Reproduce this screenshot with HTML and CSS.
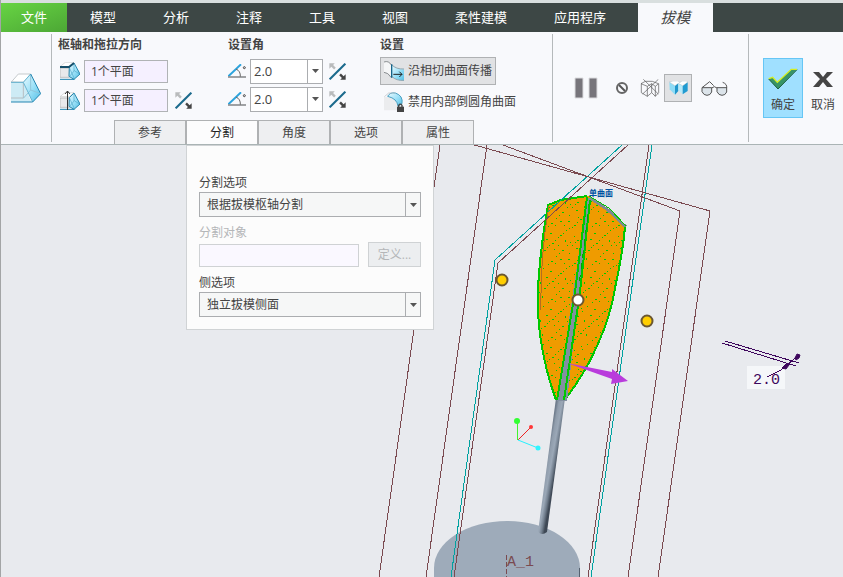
FILE: index.html
```
<!DOCTYPE html>
<html lang="zh-CN">
<head>
<meta charset="utf-8">
<title>拔模</title>
<link rel="stylesheet" href="styles.css">
</head>
<body>
<svg class="defs" width="0" height="0" aria-hidden="true">
  <defs>
    <linearGradient id="glass" x1="0" y1="0" x2="1" y2="1">
      <stop offset="0" stop-color="#eafaff"/><stop offset="0.5" stop-color="#9fe2f8"/><stop offset="1" stop-color="#52bfe6"/>
    </linearGradient>
    <symbol id="flip" viewBox="0 0 48 50">
      <path d="M1 48L47 2" stroke="#1b6a8c" stroke-width="6"/>
      <path d="M0 1h16l-5 5 8 8-5 5-8-8-6 6z" fill="#b9bbbc"/>
      <path d="M48 49H32l5-5-8-8 5-5 8 8 6-6z" fill="#444"/>
    </symbol>
    <symbol id="angle" viewBox="0 0 54 42">
      <path d="M1 37L39 1" stroke="#2ba3dd" stroke-width="6"/>
      <path d="M0 39h54" stroke="#8d9092" stroke-width="5"/>
      <path d="M24 15q14 6 13 23" fill="none" stroke="#666" stroke-width="3"/>
      <circle cx="49" cy="11" r="3" fill="none" stroke="#444" stroke-width="3"/>
    </symbol>
    <symbol id="wedge" viewBox="0 0 60 54">
      <path d="M0 14L16 1h26L28 14z" fill="#fff" stroke="#c8cacc" stroke-width="2"/>
      <path d="M0 18h28v28H0z" fill="#e8e9eb" stroke="#aaa" stroke-width="2"/>
      <path d="M28 17L42 3 60 36 42 52 27 43z" fill="url(#glass)" stroke="#2686ac" stroke-width="3"/>
      <path d="M28 17l16 35M29 43l14-17 15 10M42 3v24" fill="none" stroke="#55a9ca" stroke-width="2"/>
      <path d="M0 52h43" stroke="#1b83af" stroke-width="3"/>
    </symbol>
    <symbol id="arrow" viewBox="0 0 7 4"><path d="M0 0h7L3.500 4z" fill="#555"/></symbol>
  </defs>
</svg>

<nav class="menu">
  <a class="file" href="#">文件</a>
  <a href="#">模型</a>
  <a href="#">分析</a>
  <a href="#">注释</a>
  <a href="#">工具</a>
  <a href="#">视图</a>
  <a href="#">柔性建模</a>
  <a href="#">应用程序</a>
  <a class="current" href="#" aria-current="page">拔模</a>
</nav>

<header class="ribbon">
  <div class="tool">
    <svg width="30" height="30" viewBox="0 0 90 90" aria-hidden="true">
      <path d="M1 27L22 3h37L37 28z" fill="#fff" stroke="#c5cacd" stroke-width="3"/>
      <path d="M0 28h37L61 87H0z" fill="#cdebf5"/>
      <path d="M0 28h37v47H0" fill="none" stroke="#b6bdc1" stroke-width="3"/>
      <path d="M37 28L59 3 89 62 65 87z" fill="url(#glass)"/>
      <path d="M59 3v48L37 76M59 51l30 11" fill="none" stroke="#8fc5da" stroke-width="3"/>
      <path d="M0 28h37L59 3M37 28l28 59" fill="none" stroke="#64b5d3" stroke-width="3"/>
      <path d="M59 3l30 59-24 25H0" fill="none" stroke="#2385b1" stroke-width="3"/>
    </svg>
  </div>
  <div class="rule"></div>
  <div class="settings">
    <div class="groups">
      <section class="group pivot">
        <h2>枢轴和拖拉方向</h2>
        <div class="row">
          <svg width="20" height="18" aria-hidden="true"><use href="#wedge"/><path d="M0 5h9l5-4" fill="none" stroke="#174f6b" stroke-width="2"/></svg>
          <input type="text" value="1个平面" aria-label="枢轴">
        </div>
        <div class="row">
          <svg width="20" height="20" aria-hidden="true"><use href="#wedge" y="2" height="18"/><path d="M7.500 1v19M5 4l2.500-3L10 4" fill="none" stroke="#333"/></svg>
          <input type="text" value="1个平面" aria-label="拖拉方向">
          <button class="flip" aria-label="反向"><svg width="17" height="17"><use href="#flip"/></svg></button>
        </div>
      </section>
      <section class="group angles">
        <h2>设置角</h2>
        <div class="row">
          <svg width="18" height="14" aria-hidden="true"><use href="#angle"/></svg>
          <span class="combo"><select aria-label="角度 1"><option>2.0</option></select><span class="drop"><svg width="7" height="4"><use href="#arrow"/></svg></span></span>
          <button class="flip" aria-label="反转角度 1"><svg width="17" height="17"><use href="#flip"/></svg></button>
        </div>
        <div class="row">
          <svg width="18" height="14" aria-hidden="true"><use href="#angle"/></svg>
          <span class="combo"><select aria-label="角度 2"><option>2.0</option></select><span class="drop"><svg width="7" height="4"><use href="#arrow"/></svg></span></span>
          <button class="flip" aria-label="反转角度 2"><svg width="17" height="17"><use href="#flip"/></svg></button>
        </div>
      </section>
      <section class="group options">
        <h2>设置</h2>
        <button class="toggle pressed" aria-pressed="true">
          <svg width="20" height="20" viewBox="0 0 60 60" aria-hidden="true">
            <path d="M0 3q14-5 22 9v36Q10 32 0 34z" fill="#f5f6f7"/>
            <path d="M0 3q14-5 22 9M0 34q12 0 22 16" fill="none" stroke="#8b8f92" stroke-width="3"/>
            <path d="M23 12q13 14 37 13v34q-23 1-37-13z" fill="url(#glass)"/>
            <path d="M23 11q13 14 37 13M23 46q14 14 37 12" fill="none" stroke="#92a6b0" stroke-width="3"/>
            <path d="M23 10v40" stroke="#15658a" stroke-width="4"/>
            <path d="M28 40h26M46 32l8 8-8 8" fill="none" stroke="#222" stroke-width="3"/>
          </svg>沿相切曲面传播</button>
        <button class="toggle" aria-pressed="false">
          <svg width="20" height="20" viewBox="0 0 60 60" aria-hidden="true">
            <path d="M0 15h14q24 5 28 28v12H0z" fill="#ebecee"/>
            <path d="M11 13Q18 0 34 3q24 8 20 32l-12 8Q40 20 11 13z" fill="url(#glass)" stroke="#4a9fc1" stroke-width="3"/>
            <path d="M1 14L14 3l20 0" fill="none" stroke="#b9bdc0" stroke-width="2"/>
            <path d="M44 45v-5q5-7 10 0v5" fill="none" stroke="#444" stroke-width="4"/>
            <path d="M39 44h21v16H39z" fill="#444"/>
          </svg>禁用内部倒圆角曲面</button>
      </section>
    </div>
    <div class="tabs" role="tablist">
      <button role="tab" aria-selected="false">参考</button>
      <button role="tab" aria-selected="true" aria-controls="split-panel">分割</button>
      <button role="tab" aria-selected="false">角度</button>
      <button role="tab" aria-selected="false">选项</button>
      <button role="tab" aria-selected="false">属性</button>
    </div>
  </div>
  <div class="rule"></div>
  <div class="preview">
    <button aria-label="暂停"><svg width="24" height="22" viewBox="0 0 24 22"><path d="M1 1h8v20H1zM15 1h8v20h-8z" fill="#77757b" stroke="#dcdcdf"/></svg></button>
    <div class="modes">
      <button aria-label="无预览"><svg width="12" height="12" viewBox="0 0 12 12"><circle cx="6" cy="6" r="5" fill="none" stroke="#666" stroke-width="2"/><path d="M3 3l6 6" stroke="#555" stroke-width="2"/></svg></button>
      <button aria-label="分离"><svg width="20" height="18" viewBox="0 0 60 54" fill="none" stroke="#555" stroke-width="2"><path d="M3 14l13-7h21l18 7M3 14l19 8 13-8 11 8 10-8M4 14v27l18 11V22M35 14v27L22 52M35 41l11 11 10-11V14M46 22v30M10 1l45 44M55 1L8 45"/></svg></button>
      <button class="pressed" aria-label="连接" aria-pressed="true"><svg width="19" height="14" viewBox="0 0 57 42"><path d="M1 4l17 10v27L2 25z" fill="#8edcf6"/><path d="M18 14l10-9v25L18 41z" fill="#2197cc"/><path d="M28 6l13 8v26L28 28z" fill="#b5ebfb"/><path d="M41 14l15-10v26L41 40z" fill="#219bd1"/><path d="M1 3l11-3h16l4 5 7-5h13l4 3-5 4-10 7-13-7-10 7z" fill="#fff" stroke="#8ca9b6"/></svg></button>
    </div>
    <button aria-label="校验"><svg width="27" height="15" viewBox="0 0 81 45"><path d="M3 20h29v13q-4 10-14 10T3 32zM48 20h29v13q-4 10-14 10T48 32z" fill="#dce4ea" stroke="#555" stroke-width="3"/><path d="M3 20L26 2l12 12M32 21q8-8 16 0M77 21Q79 9 65 4" fill="none" stroke="#555" stroke-width="3"/></svg></button>
  </div>
  <div class="rule"></div>
  <div class="finish">
    <button class="ok"><svg width="30" height="22" viewBox="0 0 90 64" aria-hidden="true"><path d="M2 32l12-5 14 15L70 3h17L30 62z" fill="#379467"/><path d="M2 32l28 30L87 4" fill="none" stroke="#1c6040" stroke-width="3"/><path d="M2 31l12-4 14 15L70 3h17" fill="none" stroke="#d5ee22" stroke-width="4"/></svg>确定</button>
    <button class="cancel"><svg width="20" height="22" viewBox="0 0 20 22" aria-hidden="true"><path d="M0 4h6l4 5 4-5h6l-7 7 7 8h-6l-4-5-4 5H0l7-8z" fill="#454545"/></svg>取消</button>
  </div>
</header>

<main class="viewport">
  <svg class="scene" width="100%" height="100%" role="img" aria-label="三维模型">
    <defs>
      <linearGradient id="rod" gradientUnits="userSpaceOnUse" x1="545" y1="466" x2="556" y2="468">
        <stop offset="0" stop-color="#707d8d"/><stop offset="0.200" stop-color="#909dac"/><stop offset="0.500" stop-color="#9ba8b7"/><stop offset="0.750" stop-color="#748190"/><stop offset="1" stop-color="#3f4956"/>
      </linearGradient>
      <pattern id="mesh" width="44" height="38" patternUnits="userSpaceOnUse">
        <path d="M0 37h1v1H0zM2 35h2v1H2zM5 32h1v1H5zM8 29h2v1H8zM11 26h1v1h-1zM13 24h1v1h-1zM16 22h2v1h-2zM19 19h1v1h-1zM21 17h1v1h-1zM24 15h2v1h-2zM27 12h1v1h-1zM30 9h1v1h-1zM32 7h2v1h-2zM35 5h1v1h-1zM38 2h1v1h-1zM41 0h1v1h-1zM0 17h1v1H0zM3 14h1v1H3zM5 12h2v1H5zM10 7h1v1h-1zM15 2h1v1h-1zM20 36h1v1h-1zM23 33h2v1h-2zM28 28h1v1h-1zM31 25h1v1h-1zM34 22h2v1h-2zM39 17h1v1h-1zM42 14h1v1h-1zM4 20h2v1H4zM9 4h1v1H9zM14 30h1v2h-1zM22 5h2v1h-2zM26 21h1v1h-1zM32 31h2v1h-2zM37 12h1v2h-1zM41 25h1v1h-1zM18 11h2v1h-2zM6 27h1v1H6zM36 35h1v1h-1zM12 16h1v2h-1zM27 35h1v1h-1zM40 31h2v1h-2zM2 8h1v1H2zM30 17h1v1h-1z" fill="#00c800"/>
      </pattern>
    </defs>
    <g transform="translate(-1 -145)">
      <path d="M434 568V600H580V568A73 47 0 0 0 434 568z" fill="#9eabba"/>
      <path d="M579.500 568v32" stroke="#566170"/>
      <path d="M556 398h9L547 532q-5 4-9 0z" fill="url(#rod)"/>
      <g fill="none" stroke="#00a2a0" shape-rendering="crispEdges">
        <path d="M622 145L495 260 451 577"/><path d="M652 145L591 577"/>
      </g>
      <g fill="none" stroke="#7a4a50" shape-rendering="crispEdges">
        <path d="M440 145L379 577M487 145L426 577M471 144L710 211 658 577M503 145L680 211 628 577M628 145L498 263 454 577M649 145L588 577"/>
      </g>
      <g shape-rendering="crispEdges">
        <path d="M548 205L561 200 587 196 589 196 608 209 625 226Q623 252 617 280Q612 315 598 345Q585 374 565 401L556 400Q545 370 540 335Q536 300 539 275Q541 245 548 205z" fill="#ef9b00"/>
        <path d="M548 205L561 200 587 196 589 196 608 209 625 226Q623 252 617 280Q612 315 598 345Q585 374 565 401L556 400Q545 370 540 335Q536 300 539 275Q541 245 548 205z" fill="url(#mesh)"/>
        <path d="M590 198l18 12 18 17" fill="none" stroke="#7e8b91" stroke-width="3"/>
        <path d="M625 227q-2 24-9 56-5 33-19 63-11 26-33 55M556 400Q545 370 540 335 536 300 539 275 541 245 548 205L561 200 587 196" fill="none" stroke="#00c800" stroke-width="2"/>
        <path d="M589 196l20 12 17 18" fill="none" stroke="#00c800"/>
        <path d="M541 310q-1-54 8-104" fill="none" stroke="#b66d20"/>
        <path d="M587 198h3L567 401h-10z" fill="#8290a0"/>
        <path d="M587 197L575 292 557 400M590 200L580 292 564 400" fill="none" stroke="#00c800" stroke-width="2"/>
        <path d="M588 215L579 285" stroke="#00a800" stroke-dasharray="7 5"/>
        <path d="M573 189L548 212" stroke="#00a2a0"/><path d="M573 195L542 223" stroke="#7a4a50"/>
      </g>
      <path d="M567 363l45 9v-3l16 12-17 3 1-5z" fill="#b93cdc"/>
      <g stroke="#6b5731" stroke-width="2" fill="#ffce00"><circle cx="502" cy="280" r="5.500"/><circle cx="647" cy="321" r="5.500"/><circle cx="578" cy="300" r="5.500" fill="#fff"/></g>
      <path d="M517.500 440V421" stroke="#42f32f"/><path d="M518 440l13-13" stroke="#e22"/><path d="M518 440l20 8" stroke="#25f2ff"/>
      <circle cx="517" cy="421" r="3" fill="#32ff32"/><circle cx="531" cy="427" r="2" fill="#ff3636"/><circle cx="538" cy="448" r="2.500" fill="#30f5ff"/>
      <path d="M747 366h38v23h-38z" fill="#f5f7f9"/>
      <g stroke="#3e075d" shape-rendering="crispEdges"><path d="M725 341l74 22M722 343l74 23"/><path d="M767 377l14-7 18-15" fill="none"/></g>
      <path d="M782 368l5-5 2 2-3 4zM795 358l2-4 3 1-1 3-3 2z" fill="#3e075d" stroke="#3e075d"/>
      <text class="dimension" x="753" y="384">2.0</text>
      <text class="surface" x="589" y="196">单曲面</text>
      <path d="M506.500 555v22" stroke="#7a4a50" stroke-dasharray="5 2"/>
      <text class="axis" x="507" y="566">A_1</text>
    </g>
  </svg>

  <form class="panel" id="split-panel">
    <label for="split-option">分割选项</label>
    <span class="combo"><select id="split-option"><option>根据拔模枢轴分割</option></select><span class="drop"><svg width="7" height="4"><use href="#arrow"/></svg></span></span>
    <label class="off" for="split-object">分割对象</label>
    <div class="define"><input id="split-object" type="text" disabled><button type="button" disabled>定义...</button></div>
    <label for="side-option">侧选项</label>
    <span class="combo"><select id="side-option"><option>独立拔模侧面</option></select><span class="drop"><svg width="7" height="4"><use href="#arrow"/></svg></span></span>
  </form>
</main>
</body>
</html>
```

FILE: styles.css
```
* { box-sizing: border-box; }

body {
  margin: 0;
  min-height: 100vh;
  display: flex;
  flex-direction: column;
  border-left: 1px solid #a3a5a6;
  background: #e8eaee;
  color: #444;
  font: 12px/18px "Open Sans", "Noto Sans CJK SC", sans-serif;
}

svg { display: block; flex: none; }
.defs { position: absolute; }

button, input, select {
  margin: 0;
  font: inherit;
  color: inherit;
}

button {
  display: flex;
  align-items: center;
  justify-content: center;
  padding: 0;
  border: 1px solid transparent;
  border-radius: 0;
  background: none;
}

/* Menu bar */
.menu {
  display: flex;
  height: 32px;
  border-top: 3px solid #d9dfdf;
  background: #3d4745;
  font-size: 13px;
  line-height: 29px;
}
.menu a {
  padding: 0 24px 0 23px;
  color: #fff;
  text-decoration: none;
  white-space: nowrap;
}
.menu .file {
  padding: 0 20px;
  background: linear-gradient(160deg, #67d443, #4ca735);
}
.menu .current {
  margin-left: 8px;
  padding: 0 23px 0 22px;
  background: #f8f9fc;
  color: #444;
  font-size: 15px;
  font-style: italic;
}

/* Ribbon */
.ribbon {
  display: flex;
  border-bottom: 1px solid #aab4b5;
  background: #f8f9fc;
}
.rule {
  width: 1px;
  margin: 2px 0;
  background: #b5b9bb;
}
.tool {
  display: flex;
  align-items: center;
  justify-content: center;
  width: 50px;
}
.groups {
  display: flex;
  height: 88px;
  padding: 4px 0 0 6px;
}
.group h2 {
  margin: 0 0 3px;
  font-size: 12px;
  line-height: 18px;
  font-weight: 700;
}
.group .row { display: flex; align-items: center; height: 28px; gap: 4px; }
.pivot { width: 170px; }
.pivot .row { padding-left: 2px; }
.pivot input {
  width: 84px;
  height: 23px;
  padding: 0 6px;
  border: 1px solid #b0b3b5;
  background: #f5f0ff;
}
.pivot .flip { margin-left: 2px; }
.pivot .row + .row { margin-top: 1px; }
.angles { width: 152px; }
.angles .flip { margin-left: 1px; }
.options { width: 172px; }
.toggle {
  height: 28px;
  gap: 4px;
  margin-bottom: 3px;
  padding: 0 3px;
  white-space: nowrap;
}
.pressed { border-color: #afb1b3; background: #e1e2e4; }

.combo { display: grid; height: 25px; }
.combo > * { grid-area: 1 / 1; }
.combo select {
  width: 100%;
  height: 25px;
  padding: 0 18px 0 7px;
  border: 1px solid #abadb0;
  border-radius: 0;
  background: #f6f7f7;
  appearance: none;
}
.angles .combo { width: 73px; }
.angles .combo select { padding-left: 3px; background: #fff; font-size: 13px; }
.drop {
  justify-self: end;
  display: flex;
  align-items: center;
  justify-content: center;
  width: 16px;
  border-left: 1px solid #abadb0;
  pointer-events: none;
}

.tabs { display: flex; padding-left: 62px; }
.tabs button {
  width: 72px;
  height: 24px;
  border-color: #afb1b3;
  border-bottom: 0;
  background: #eeeff1;
}
.tabs [aria-selected="true"] { background: #fcfcfd; color: #222; }

.preview {
  display: flex;
  align-items: center;
  gap: 8px;
  width: 195px;
  padding-left: 19px;
}
.preview button { width: 28px; height: 28px; }
.modes { display: flex; }

.finish {
  display: flex;
  align-items: center;
  padding-left: 14px;
}
.finish button {
  flex-direction: column;
  gap: 6px;
  width: 40px;
  height: 60px;
  padding-top: 6px;
}
.ok { border-color: #66c6f5; background: #a0e0ff; }

/* Model view */
.viewport {
  position: relative;
  display: flex;
  flex: 1;
  min-height: 320px;
}
.scene { position: absolute; inset: 0; }
.dimension { fill: #3e075d; font: 15px "Liberation Mono", monospace; }
.surface { fill: #0051a0; font: 8px "Noto Sans CJK SC", sans-serif; font-weight: 700; }
.axis { fill: #7a4a50; font: 15px "Liberation Mono", monospace; }

.panel {
  position: absolute;
  top: 0;
  left: 185px;
  width: 248px;
  padding: 28px 12px 12px;
  border: 1px solid #d0d3d5;
  background: #fcfcfc;
}
.panel label { display: block; }
.panel .combo, .define { margin-bottom: 7px; }
.panel .combo:last-child { margin-bottom: 0; }
.off, .define { color: #b4b6b8; }
.define {
  display: flex;
  align-items: flex-end;
  gap: 9px;
}
.define input {
  flex: 1;
  min-width: 0;
  height: 23px;
  border: 1px solid #cfd2d4;
  background: #faf8ff;
}
.define button {
  width: 53px;
  height: 25px;
  border-color: #cfd2d4;
  background: #eceef0;
}
```
